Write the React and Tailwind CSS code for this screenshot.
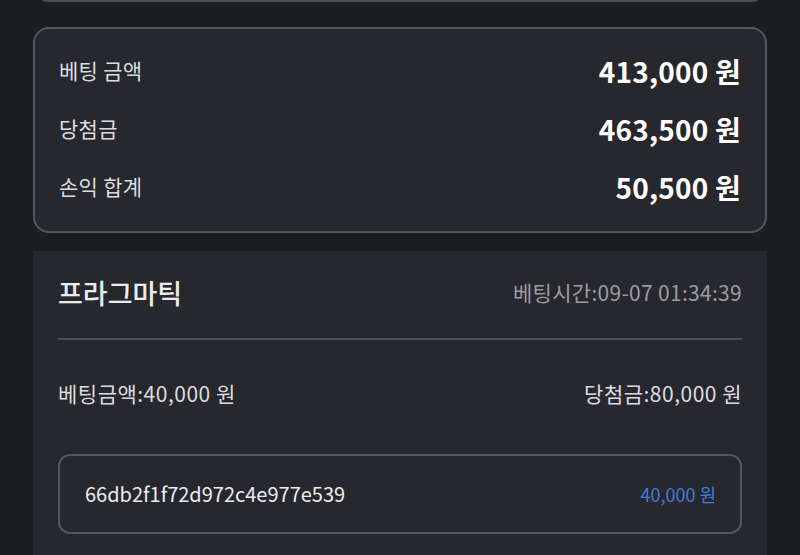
import React from "react";

const summary = [
  { label: "베팅 금액", value: "413,000 원" },
  { label: "당첨금", value: "463,500 원" },
  { label: "손익 합계", value: "50,500 원" },
];

export default function App() {
  return (
    <div
      className="min-h-[555px] w-[800px] overflow-hidden bg-[#1c1d21] px-[33px] text-[#e4e4e6]"
      style={{ fontFamily: '"Noto Sans CJK KR", "Noto Sans", sans-serif' }}
    >
      {/* previous card, cut off at top */}
      <div className="-mt-[30px] h-[32px] rounded-2xl border-2 border-[#4e4f55] bg-[#27282e]" />

      {/* summary */}
      <div className="mt-[25px] rounded-2xl border-2 border-[#55565c] bg-[#27282e] px-6 pt-[13px] pb-[15px]">
        {summary.map((row) => (
          <div key={row.label} className="flex h-[58px] items-center justify-between">
            <span className="text-[21px] tracking-[0.3px] text-[#dcdce0]">{row.label}</span>
            <span className="text-[28px] font-semibold tracking-[0.2px] text-white">{row.value}</span>
          </div>
        ))}
      </div>

      {/* bet detail */}
      <div className="mt-[18px] bg-[#27282e] px-[25px] pt-6 pb-10">
        <div className="flex h-9 items-center justify-between">
          <span className="text-[27px] font-medium text-[#ececee]">프라그마틱</span>
          <span className="text-[21px] tracking-[0.3px] text-[#9b9ca1]">베팅시간:09-07 01:34:39</span>
        </div>
        <div className="mt-[27px] h-[2px] bg-[#4f5056]" />
        <div className="mt-[39px] flex h-[30px] items-center justify-between text-[21px] tracking-[0.5px] text-[#dcdce0]">
          <span>베팅금액:40,000 원</span>
          <span>당첨금:80,000 원</span>
        </div>
        <div className="mt-[45px] flex h-20 items-center justify-between rounded-xl border-2 border-[#55565c] pr-6 pl-[25px]">
          <span className="text-[20px] text-[#ececee]">66db2f1f72d972c4e977e539</span>
          <span className="text-[18px] text-[#407cd9]">40,000 원</span>
        </div>
      </div>
    </div>
  );
}
